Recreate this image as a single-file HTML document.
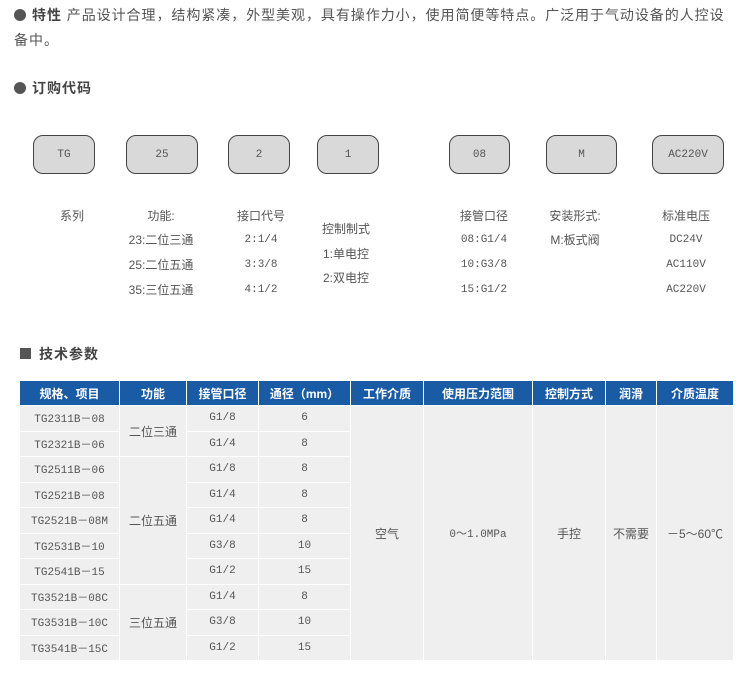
<!DOCTYPE html>
<html><head><meta charset="utf-8"><style>
body{margin:0;width:750px;height:700px;background:#fff;position:relative;font-family:"Liberation Sans","Noto Sans CJK SC",sans-serif;color:#555;font-size:13px;overflow:hidden}
.a{position:absolute;white-space:nowrap}
.dot{display:inline-block;width:12px;height:12px;border-radius:50%;background:#555;margin-right:6px;vertical-align:-1px}
.box{position:absolute;top:135px;height:37px;border:1.5px solid #444;border-radius:10px;background:#d9d9d9;font-family:"Liberation Mono","Noto Sans CJK SC",monospace;font-size:11px;color:#555;display:flex;align-items:center;justify-content:center}
.l{position:absolute;font-size:12px;text-align:center;transform:translateX(-50%);white-space:nowrap;line-height:16px}
.mono{font-family:"Liberation Mono","Noto Sans CJK SC",monospace;font-size:11px}
table{position:absolute;left:19px;top:380px;border-collapse:collapse;table-layout:fixed}
td,th{border:1px solid #fff;padding:0;text-align:center;font-size:11px;vertical-align:middle}
th{background:#1a5ba6;color:#fff;height:24px;font-size:12px;font-weight:bold}
td{background:#efefef;height:24.5px;color:#555}
td.m{font-family:"Liberation Mono","Noto Sans CJK SC",monospace;font-size:11px}
</style></head><body>
<div class="a" style="left:14px;top:5px;font-size:14px;color:#444;letter-spacing:0.95px"><span class="dot"></span><b>特性</b> <span style="color:#555">产品设计合理，结构紧凑，外型美观，具有操作力小，使用简便等特点。广泛用于气动设备的人控设</span></div>
<div class="a" style="left:14px;top:30px;font-size:14px;letter-spacing:1px">备中。</div>
<div class="a" style="left:14px;top:78px;font-size:14px;color:#444;letter-spacing:1px"><span class="dot"></span><b>订购代码</b></div>

<div class="box" style="left:33px;width:60px">TG</div>
<div class="box" style="left:126px;width:70px">25</div>
<div class="box" style="left:228px;width:60px">2</div>
<div class="box" style="left:317px;width:60px">1</div>
<div class="box" style="left:449px;width:59px">08</div>
<div class="box" style="left:546px;width:69px">M</div>
<div class="box" style="left:652px;width:70px">AC220V</div>

<div class="l" style="left:72px;top:208px">系列</div>
<div class="l" style="left:161px;top:208px">功能:</div>
<div class="l" style="left:161px;top:232px">23:二位三通</div>
<div class="l" style="left:161px;top:257px">25:二位五通</div>
<div class="l" style="left:161px;top:282px">35:三位五通</div>
<div class="l" style="left:261px;top:208px">接口代号</div>
<div class="l mono" style="left:261px;top:232px">2:1/4</div>
<div class="l mono" style="left:261px;top:257px">3:3/8</div>
<div class="l mono" style="left:261px;top:282px">4:1/2</div>
<div class="l" style="left:346px;top:221px">控制制式</div>
<div class="l" style="left:346px;top:246px">1:单电控</div>
<div class="l" style="left:346px;top:270px">2:双电控</div>
<div class="l" style="left:484px;top:208px">接管口径</div>
<div class="l mono" style="left:484px;top:232px">08:G1/4</div>
<div class="l mono" style="left:484px;top:257px">10:G3/8</div>
<div class="l mono" style="left:484px;top:282px">15:G1/2</div>
<div class="l" style="left:575px;top:208px">安装形式:</div>
<div class="l" style="left:575px;top:232px">M:板式阀</div>
<div class="l" style="left:686px;top:208px">标准电压</div>
<div class="l mono" style="left:686px;top:232px">DC24V</div>
<div class="l mono" style="left:686px;top:257px">AC110V</div>
<div class="l mono" style="left:686px;top:282px">AC220V</div>

<div class="a" style="left:20px;top:344px;font-size:14px;color:#444;letter-spacing:1px"><span style="display:inline-block;width:11px;height:11px;background:#555;margin-right:8px"></span><b>技术参数</b></div>

<table>
<colgroup><col style="width:100px"><col style="width:67px"><col style="width:72px"><col style="width:92px"><col style="width:73px"><col style="width:109px"><col style="width:73px"><col style="width:51px"><col style="width:77px"></colgroup>
<tr><th>规格、项目</th><th>功能</th><th>接管口径</th><th>通径（mm）</th><th>工作介质</th><th>使用压力范围</th><th>控制方式</th><th>润滑</th><th>介质温度</th></tr>
<tr><td class="m">TG2311B－08</td><td rowspan="2" style="font-size:12px">二位三通</td><td class="m">G1/8</td><td class="m">6</td><td rowspan="10" style="font-size:12px">空气</td><td rowspan="10" class="m">0～1.0MPa</td><td rowspan="10" style="font-size:12px">手控</td><td rowspan="10" style="font-size:12px">不需要</td><td rowspan="10" style="font-size:12px">－5～60℃</td></tr>
<tr><td class="m">TG2321B－06</td><td class="m">G1/4</td><td class="m">8</td></tr>
<tr><td class="m">TG2511B－06</td><td rowspan="5" style="font-size:12px">二位五通</td><td class="m">G1/8</td><td class="m">8</td></tr>
<tr><td class="m">TG2521B－08</td><td class="m">G1/4</td><td class="m">8</td></tr>
<tr><td class="m">TG2521B－08M</td><td class="m">G1/4</td><td class="m">8</td></tr>
<tr><td class="m">TG2531B－10</td><td class="m">G3/8</td><td class="m">10</td></tr>
<tr><td class="m">TG2541B－15</td><td class="m">G1/2</td><td class="m">15</td></tr>
<tr><td class="m">TG3521B－08C</td><td rowspan="3" style="font-size:12px">三位五通</td><td class="m">G1/4</td><td class="m">8</td></tr>
<tr><td class="m">TG3531B－10C</td><td class="m">G3/8</td><td class="m">10</td></tr>
<tr><td class="m">TG3541B－15C</td><td class="m">G1/2</td><td class="m">15</td></tr>
</table>
</body></html>
